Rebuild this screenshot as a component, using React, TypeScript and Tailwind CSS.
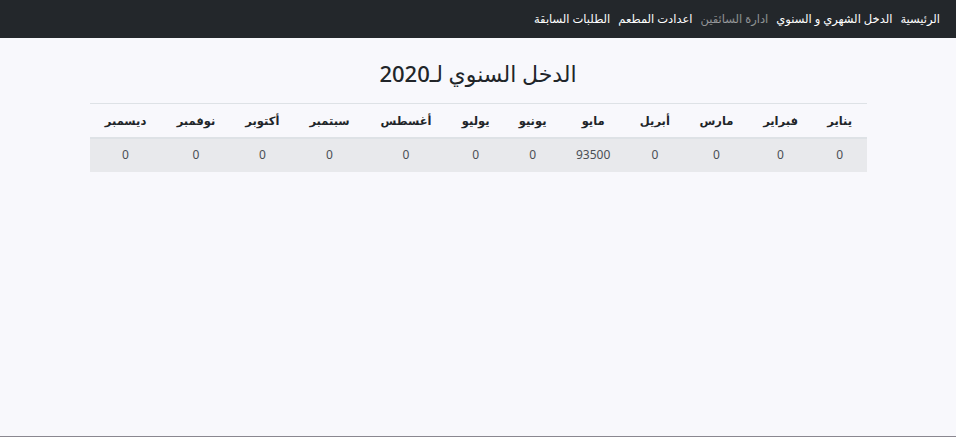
const months = [
  { name: 'يناير', value: 0 },
  { name: 'فبراير', value: 0 },
  { name: 'مارس', value: 0 },
  { name: 'أبريل', value: 0 },
  { name: 'مايو', value: 93500 },
  { name: 'يونيو', value: 0 },
  { name: 'يوليو', value: 0 },
  { name: 'أغسطس', value: 0 },
  { name: 'سبتمبر', value: 0 },
  { name: 'أكتوبر', value: 0 },
  { name: 'نوفمبر', value: 0 },
  { name: 'ديسمبر', value: 0 },
];

const links = [
  { label: 'الرئيسية', muted: false },
  { label: 'الدخل الشهري و السنوي', muted: false },
  { label: 'ادارة السائقين', muted: true },
  { label: 'اعدادت المطعم', muted: false },
  { label: 'الطلبات السابقة', muted: false },
];

export default function App() {
  return (
    <div
      dir="rtl"
      className="flex h-[437px] flex-col bg-[#f8f8fc] font-['Noto_Sans','DejaVu_Sans',sans-serif] text-[#212529]"
    >
      {/* Navbar */}
      <nav className="flex h-[38px] shrink-0 items-center bg-[#23272b] px-[16px]">
        <ul className="flex items-center gap-[8px] text-[11.5px]">
          {links.map((l) => (
            <li key={l.label} className={l.muted ? 'text-white/50' : 'text-white'}>
              {l.label}
            </li>
          ))}
        </ul>
      </nav>

      {/* Content */}
      <main className="flex-1">
        <h1 className="mt-[17px] text-center text-[22px] font-medium leading-[36px]">الدخل السنوي لـ2020</h1>

        <div className="mx-auto mt-[12px] w-[777px]">
          <table className="w-full border-collapse text-center text-[12px]">
            <thead>
              <tr className="border-t border-[#dee2e6]">
                {months.map((m) => (
                  <th key={m.name} className="h-[34px] border-b-2 border-[#dee2e6] px-3 text-[11.5px] font-bold">
                    {m.name}
                  </th>
                ))}
              </tr>
            </thead>
            <tbody>
              <tr className="bg-[#e8e9ec]">
                {months.map((m) => (
                  <td key={m.name} className="h-[34px] px-3 text-[#4b4f55]">
                    {m.value}
                  </td>
                ))}
              </tr>
            </tbody>
          </table>
        </div>
      </main>
      <div className="h-px bg-[#8a8790]" />
    </div>
  );
}
